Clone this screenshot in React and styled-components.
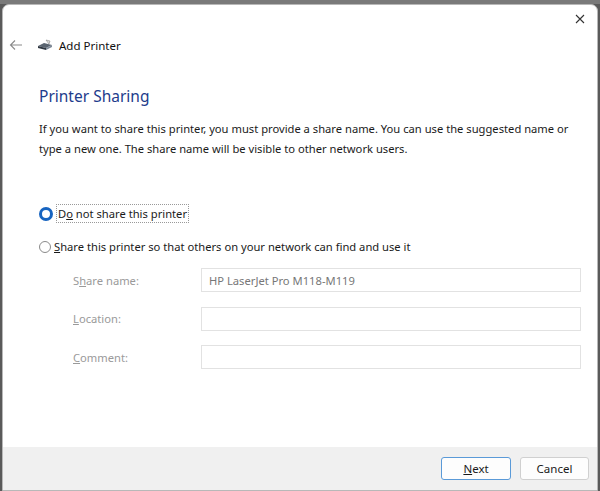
import React from "react";
import styled, { createGlobalStyle } from "styled-components";

const G = createGlobalStyle`
  html,body{margin:0;padding:0;background:#5a5a5a;}
  body{font-family:"Noto Sans","Open Sans",sans-serif;font-size:11.2px;color:#1a1a1a;}
  #root{width:600px;height:491px;overflow:hidden;}
`;
const Top = styled.div`height:4px;background:#7a7a7a;`;
const Win = styled.div`
  margin-left:2px;width:596px;height:487px;background:#fff;border:1px solid #b8b8b8;
  border-radius:7px 7px 0 0;box-sizing:border-box;display:flex;flex-direction:column;
`;
const TitleBar = styled.div`height:28px;display:flex;justify-content:flex-end;align-items:center;padding-right:12px;`;
const Header = styled.div`display:flex;align-items:center;height:24px;padding-left:6px;gap:14px;margin-top:0;`;
const Crumb = styled.div`display:flex;align-items:center;gap:6px;font-size:11.5px;color:#111;`;
const Body = styled.div`flex:1;padding:28px 0 0 36px;`;
const H1 = styled.div`font-size:15.5px;color:#1e3c8c;line-height:22px;`;
const P = styled.p`margin:12px 20px 0 0;line-height:20px;font-size:11.2px;`;
const Radio = styled.label`display:flex;align-items:center;gap:3px;margin-top:${p=>p.mt}px;`;
const Dot = styled.span`
  width:${p=>p.on?8:10}px;height:${p=>p.on?8:10}px;border-radius:50%;box-sizing:content-box;
  border:${p=>p.on?"3px solid #1764c0":"1px solid #8a8a8a"};background:#fff;
`;
const Focus = styled.span`border:1px dotted #999;padding:0 1px;line-height:17px;`;
const Fields = styled.div`margin:14px 0 0 34px;display:grid;grid-template-columns:128px 380px;row-gap:14.5px;align-items:center;`;
const Lbl = styled.span`color:#9a9a9a;`;
const Input = styled.div`height:24px;border:1px solid #e2e2e2;box-sizing:border-box;padding-left:7px;display:flex;align-items:center;color:#777;`;
const Footer = styled.div`height:43px;background:#f0f0f0;display:flex;justify-content:flex-end;align-items:center;gap:9px;padding-right:8px;`;
const Btn = styled.button`
  width:${p=>p.w}px;height:23px;font:inherit;font-size:11.5px;background:#fdfdfd;color:#1a1a1a;
  border:1px solid ${p=>p.primary?"#5a9ad8":"#d0d0d0"};border-radius:3px;
`;

export default function App(){
  return (<>
    <G/>
    <Top/>
    <Win>
      <TitleBar>
        <svg width="10" height="10" viewBox="0 0 10 10"><path d="M1 1L9 9M9 1L1 9" stroke="#333" strokeWidth="1.1"/></svg>
      </TitleBar>
      <Header>
        <svg width="14" height="12" viewBox="0 0 14 12"><path d="M13 6H1.5M6 1.5L1.5 6L6 10.5" fill="none" stroke="#8a8a8a" strokeWidth="1.1"/></svg>
        <Crumb>
          <svg width="16" height="12" viewBox="0 0 16 12">
            <path d="M9 1l4 1-1 3z" fill="#ddd" stroke="#888" strokeWidth=".6"/>
            <path d="M1 7l6-3 8 2-6 3z" fill="#5a6470"/>
            <path d="M1 7l8 2v2L1 9z" fill="#2e3640"/>
            <path d="M9 9l6-3v2l-6 3z" fill="#7e8a98"/>
          </svg>
          Add Printer
        </Crumb>
      </Header>
      <Body>
        <H1>Printer Sharing</H1>
        <P>If you want to share this printer, you must provide a share name. You can use the suggested name or type a new one. The share name will be visible to other network users.</P>
        <Radio mt={45}><Dot on/><Focus>D<u>o</u> not share this printer</Focus></Radio>
        <Radio mt={16}><Dot/><span><u>S</u>hare this printer so that others on your network can find and use it</span></Radio>
        <Fields>
          <Lbl>S<u>h</u>are name:</Lbl><Input>HP LaserJet Pro M118-M119</Input>
          <Lbl><u>L</u>ocation:</Lbl><Input/>
          <Lbl><u>C</u>omment:</Lbl><Input/>
        </Fields>
      </Body>
      <Footer>
        <Btn primary w={70}><u>N</u>ext</Btn>
        <Btn w={69}>Cancel</Btn>
      </Footer>
    </Win>
  </>);
}
